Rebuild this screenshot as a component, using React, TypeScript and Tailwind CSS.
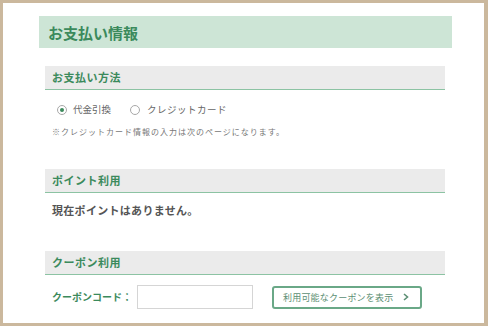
import React from 'react'

const font = { fontFamily: '"Noto Sans CJK JP", "Noto Sans", sans-serif' }

function SectionBar({ title }: { title: string }) {
  return (
    <div className="h-[24px] bg-[#ebebeb] border-b border-[#8cc3a3] flex items-center pl-[7px]">
      <span className="text-[11px] font-bold text-[#3b8a5c] leading-none tracking-[0.5px]">{title}</span>
    </div>
  )
}

function Radio({ checked }: { checked?: boolean }) {
  return (
    <span className="w-[10px] h-[10px] rounded-full border border-[#a8a8a8] bg-white flex items-center justify-center">
      {checked && <span className="w-[4px] h-[4px] rounded-full bg-[#3b8a5c]" />}
    </span>
  )
}

export default function App() {
  return (
    <div
      className="w-[488px] h-[326px] bg-white border-t-[3px] border-l-[3px] border-r-[4px] border-b-[3px] border-[#cbb89d] overflow-hidden"
      style={font}
    >
      <div className="pl-[36px] pr-[32px] pt-[13px]">
        {/* Title */}
        <div className="h-[32px] bg-[#cde5d6] flex items-center pl-[9px]">
          <h1 className="text-[15px] font-bold text-[#3b8a5c] leading-none">お支払い情報</h1>
        </div>

        <div className="ml-[6px] mr-[7px]">
          {/* Payment method */}
          <div className="mt-[18px]">
            <SectionBar title="お支払い方法" />
            <div className="mt-[14px] flex items-center h-[12px] pl-[12px] text-[9.5px] text-[#666] leading-none">
              <Radio checked />
              <span className="ml-[6px]">代金引換</span>
              <span className="ml-[19px]"><Radio /></span>
              <span className="ml-[7px] tracking-[0.5px]">クレジットカード</span>
            </div>
            <p className="mt-[12px] pl-[7px] text-[8px] text-[#777] leading-none tracking-[1px]">
              ※クレジットカード情報の入力は次のページになります。
            </p>
          </div>

          {/* Points */}
          <div className="mt-[33px]">
            <SectionBar title="ポイント利用" />
            <p className="mt-[12px] pl-[7px] text-[11px] font-bold text-[#555] leading-none tracking-[0.3px]">
              現在ポイントはありません。
            </p>
          </div>

          {/* Coupon */}
          <div className="mt-[35px]">
            <SectionBar title="クーポン利用" />
            <div className="mt-[10px] flex items-center pl-[7px]">
              <span className="w-[85px] text-[10px] font-bold text-[#3b8a5c] leading-none">クーポンコード：</span>
              <input
                type="text"
                className="w-[116px] h-[24px] border border-[#d5d5d5] bg-white outline-none"
              />
              <button className="ml-[19px] w-[150px] h-[23px] rounded-[3px] border-2 border-[#6aa887] bg-white flex items-center pl-[9px] text-[9px] text-[#5c8f74] leading-none">
                <span className="tracking-[0.2px]">利用可能なクーポンを表示</span>
                <svg className="ml-[10px]" width="6" height="8" viewBox="0 0 6 8">
                  <path d="M1 1 L4.5 4 L1 7" fill="none" stroke="#5c8f74" strokeWidth="1.6" />
                </svg>
              </button>
            </div>
          </div>
        </div>
      </div>
    </div>
  )
}
